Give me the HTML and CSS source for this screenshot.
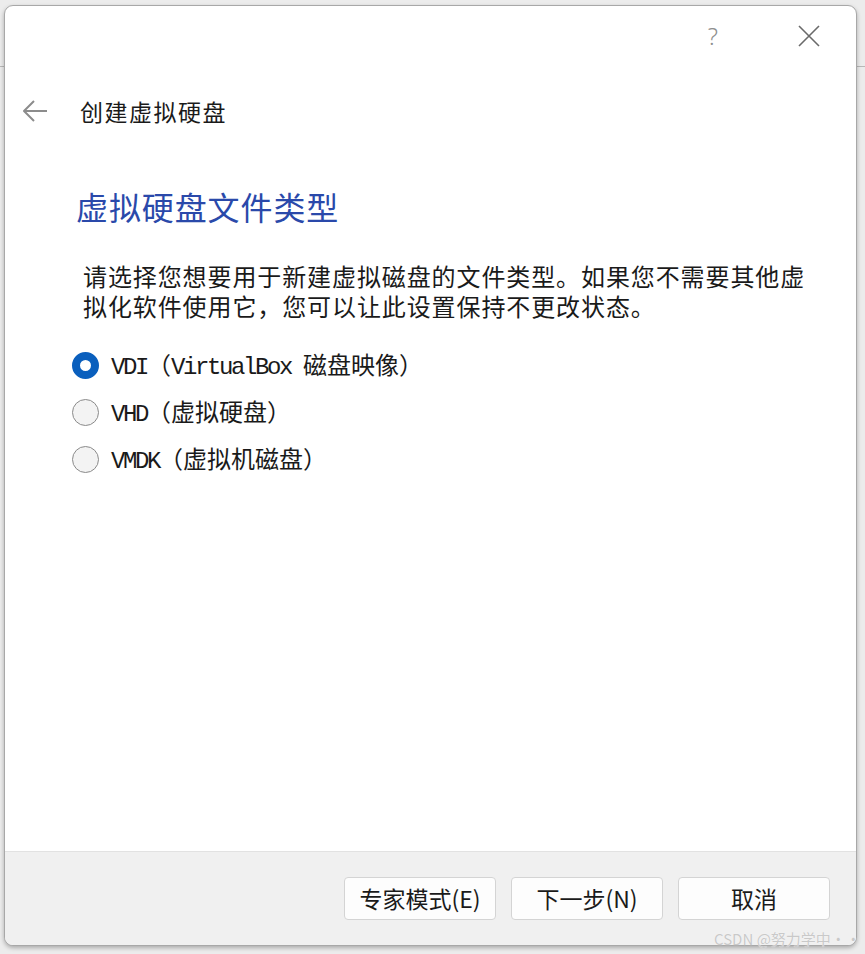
FILE: index.html
```html
<!DOCTYPE html>
<html lang="zh-CN">
<head>
<meta charset="utf-8">
<title>创建虚拟硬盘</title>
<link rel="stylesheet" href="styles.css">
</head>
<body>
<div class="backdrop-line backdrop-line-left"></div>
<div class="backdrop-line backdrop-line-right"></div>
<div class="window">
  <div class="titlebar">
    <span class="help">?</span>
    <svg class="close" width="24" height="24" viewBox="0 0 24 24"><path d="M2 2 L22 22 M22 2 L2 22" stroke="#6a6a6a" stroke-width="1.6" fill="none"/></svg>
  </div>
  <div class="header">
    <svg class="back" width="26" height="24" viewBox="0 0 26 24"><path d="M25 12 H2 M12 2 L2 12 L12 22" stroke="#8c8c8c" stroke-width="2" fill="none" stroke-linejoin="round"/></svg>
    <span class="title">创建虚拟硬盘</span>
  </div>
  <div class="main">
    <h1 class="heading">虚拟硬盘文件类型</h1>
    <p class="desc">请选择您想要用于新建虚拟磁盘的文件类型。如果您不需要其他虚拟化软件使用它，您可以让此设置保持不更改状态。</p>
    <div class="options">
      <label class="option"><span class="radio radio-on"></span><span class="label"><span class="lat">VDI</span>（<span class="lat">VirtualBox </span>磁盘映像）</span></label>
      <label class="option"><span class="radio"></span><span class="label"><span class="lat">VHD</span>（虚拟硬盘）</span></label>
      <label class="option"><span class="radio"></span><span class="label"><span class="lat">VMDK</span>（虚拟机磁盘）</span></label>
    </div>
  </div>
  <div class="footer">
    <button class="btn">专家模式(E)</button>
    <button class="btn">下一步(N)</button>
    <button class="btn">取消</button>
  </div>
</div>
<div class="watermark">CSDN @努力学中··</div>
</body>
</html>
```
FILE: styles.css
```css
html, body {
  margin: 0;
  padding: 0;
}
body {
  width: 865px;
  height: 954px;
  background: #ececec;
  font-family: "Noto Sans CJK SC", "Noto Sans", sans-serif;
  position: relative;
  overflow: hidden;
}
.backdrop-line {
  position: absolute;
  top: 66px;
  height: 1px;
  background: #b8b8b8;
}
.backdrop-line-left { left: 0; width: 5px; }
.backdrop-line-right { left: 856px; width: 9px; }
.window {
  position: relative;
  margin: 5px 0 0 4px;
  width: 853px;
  height: 941px;
  box-sizing: border-box;
  border: 1px solid #a8a8a8;
  border-radius: 9px;
  background: #ffffff;
  box-shadow: 0 2px 4px rgba(0,0,0,0.28);
  display: flex;
  flex-direction: column;
  overflow: hidden;
}
.titlebar {
  height: 60px;
  display: flex;
  align-items: center;
  justify-content: flex-end;
  padding-right: 35px;
  flex: none;
}
.help {
  font-family: "Noto Sans", sans-serif;
  font-weight: 300;
  font-size: 24px;
  color: #8e8e8e;
  line-height: 24px;
  margin-right: 79px;
}
.close { display: block; }
.header {
  height: 90px;
  display: flex;
  align-items: center;
  padding-left: 17px;
  flex: none;
}
.back { display: block; margin-right: 32px; }
.title {
  font-size: 23px;
  letter-spacing: 1.5px;
  color: #1a1a1a;
  line-height: 30px;
}
.main {
  flex: 1;
  padding-left: 67px;
}
.heading {
  margin: 28px 0 0 4px;
  font-weight: 400;
  font-size: 32px;
  letter-spacing: 0.9px;
  line-height: 44px;
  color: #2a49aa;
}
.desc {
  margin: 33px 0 0 11px;
  width: 735px;
  font-size: 24px;
  letter-spacing: 0.9px;
  line-height: 30px;
  color: #1a1a1a;
}
.options {
  margin-top: 21px;
  display: flex;
  flex-direction: column;
}
.option {
  height: 47px;
  display: flex;
  align-items: center;
}
.radio {
  width: 27px;
  height: 27px;
  box-sizing: border-box;
  border-radius: 50%;
  border: 1.5px solid #8a8a8a;
  background: #f3f3f3;
  margin-right: 12px;
  flex: none;
}
.radio-on {
  border: 8px solid #0a5fbd;
  background: #ffffff;
}
.label {
  font-size: 24px;
  color: #1a1a1a;
  line-height: 30px;
  white-space: nowrap;
}
.lat {
  font-family: "Liberation Mono", monospace;
  font-size: 24px;
  letter-spacing: -2.4px;
}
.footer {
  flex: none;
  height: 94px;
  box-sizing: border-box;
  border-top: 1px solid #e2e2e2;
  background: #f0f0f0;
  display: flex;
  justify-content: flex-end;
  align-items: flex-start;
  gap: 15px;
  padding: 25px 26px 0 0;
}
.btn {
  width: 152px;
  height: 43px;
  box-sizing: border-box;
  border: 1px solid #d4d4d4;
  border-radius: 4px;
  background: #fdfdfd;
  font-family: "Noto Sans CJK SC", sans-serif;
  font-size: 23px;
  color: #1a1a1a;
  padding: 0;
  line-height: 41px;
}
.watermark {
  position: absolute;
  left: 714px;
  top: 928px;
  font-family: "Noto Sans CJK SC", sans-serif;
  font-size: 15px;
  color: #c9c9c9;
  text-shadow: 0 0 1px #ffffff;
  white-space: nowrap;
}
```
